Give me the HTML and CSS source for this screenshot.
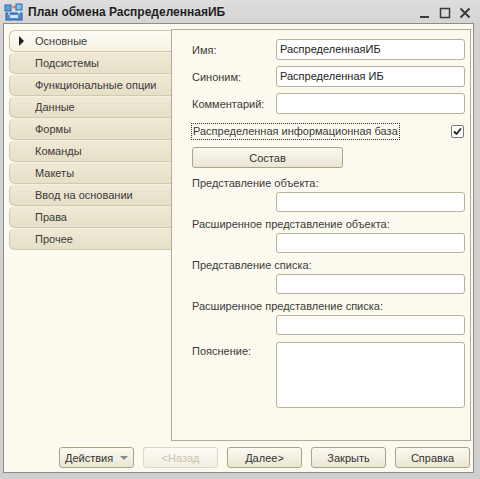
FILE: index.html
```html
<!DOCTYPE html>
<html lang="ru">
<head>
<meta charset="utf-8">
<title>План обмена РаспределеннаяИБ</title>
<link rel="stylesheet" href="styles.css">
</head>
<body>
<div class="window">
  <div class="titlebar">
    <svg class="appicon" width="20" height="18" viewBox="0 0 20 18">
      <rect x="1" y="2" width="6" height="6" fill="#5aa0d8" stroke="#2a6aa8"/>
      <rect x="12" y="1" width="6" height="6" fill="#7cc0ec" stroke="#2a6aa8"/>
      <rect x="2" y="10" width="16" height="7" fill="#4a8fcf" stroke="#245f9a"/>
      <path d="M8 4 L11 4 M10 2.5 L11.5 4 L10 5.5" stroke="#e05030" fill="none"/>
      <path d="M5 9 L5 12 M15 8 L15 11" stroke="#ffffff" fill="none"/>
      <rect x="6" y="12" width="8" height="3" fill="#cfe6f8"/>
    </svg>
    <span class="title">План обмена РаспределеннаяИБ</span>
    <div class="controls">
      <svg width="12" height="12" viewBox="0 0 12 12"><rect x="1" y="9" width="9" height="2" fill="#3a3a3a"/></svg>
      <svg width="12" height="12" viewBox="0 0 12 12"><rect x="1.5" y="1.5" width="9" height="9" fill="none" stroke="#3a3a3a" stroke-width="1.5"/></svg>
      <svg width="12" height="12" viewBox="0 0 12 12"><path d="M1.5 1.5 L10.5 10.5 M10.5 1.5 L1.5 10.5" stroke="#3a3a3a" stroke-width="2"/></svg>
    </div>
  </div>
  <div class="client">
    <div class="main">
      <div class="tabs">
        <div class="tab active"><span class="arrow"></span>Основные</div>
        <div class="tab">Подсистемы</div>
        <div class="tab">Функциональные опции</div>
        <div class="tab">Данные</div>
        <div class="tab">Формы</div>
        <div class="tab">Команды</div>
        <div class="tab">Макеты</div>
        <div class="tab">Ввод на основании</div>
        <div class="tab">Права</div>
        <div class="tab">Прочее</div>
      </div>
      <div class="panel">
        <div class="row">
          <span class="label">Имя:</span>
          <div class="input">РаспределеннаяИБ</div>
        </div>
        <div class="row">
          <span class="label">Синоним:</span>
          <div class="input">Распределенная ИБ</div>
        </div>
        <div class="row">
          <span class="label">Комментарий:</span>
          <div class="input"></div>
        </div>
        <div class="checkrow">
          <span class="focus">Распределенная информационная база</span>
          <span class="checkbox">
            <svg width="9" height="9" viewBox="0 0 9 9"><path d="M1 4.5 L3.5 7 L8 1.5" stroke="#222" stroke-width="1.8" fill="none"/></svg>
          </span>
        </div>
        <div class="btn wide">Состав</div>
        <div class="group">
          <span class="label">Представление объекта:</span>
          <div class="input short"></div>
        </div>
        <div class="group">
          <span class="label">Расширенное представление объекта:</span>
          <div class="input short"></div>
        </div>
        <div class="group">
          <span class="label">Представление списка:</span>
          <div class="input short"></div>
        </div>
        <div class="group">
          <span class="label">Расширенное представление списка:</span>
          <div class="input short"></div>
        </div>
        <div class="row top">
          <span class="label">Пояснение:</span>
          <div class="input area"></div>
        </div>
      </div>
    </div>
    <div class="footer">
      <div class="btn menu">Действия<span class="dd"></span></div>
      <div class="btn disabled">&lt;Назад</div>
      <div class="btn">Далее&gt;</div>
      <div class="btn">Закрыть</div>
      <div class="btn">Справка</div>
    </div>
  </div>
</div>
</body>
</html>
```

FILE: styles.css
```css
html, body {
  margin: 0;
  padding: 0;
}
body {
  font-family: "Liberation Sans", Arial, sans-serif;
  font-size: 11px;
  color: #3a3a3a;
  background: #d6d6d6;
}
.window {
  width: 480px;
  height: 479px;
  box-sizing: border-box;
  display: flex;
  flex-direction: column;
  background: linear-gradient(#dedede, #d2d2d2 30px, #cfcfcf);
  padding: 0 6px 6px 3px;
}
.titlebar {
  height: 23px;
  display: flex;
  align-items: center;
  flex: none;
}
.appicon {
  margin-left: 1px;
  margin-right: 4px;
}
.title {
  font-weight: bold;
  font-size: 12px;
  color: #1e1e1e;
  flex: 1;
}
.controls {
  display: flex;
  gap: 8px;
  margin-right: 3px;
  margin-top: 2px;
}
.client {
  flex: 1;
  background: #fcfaef;
  border: 1px solid #8e8e8e;
  display: flex;
  flex-direction: column;
  padding: 5px 2px 3px 5px;
  min-height: 0;
}
.main {
  height: 412px;
  display: flex;
  flex: none;
}
.tabs {
  width: 162px;
  display: flex;
  flex-direction: column;
  padding-top: 1px;
}
.tab {
  height: 22px;
  box-sizing: border-box;
  border: 1px solid #d2cab0;
  border-right: none;
  border-top-color: #f4f0e0;
  border-radius: 6px 0 0 6px;
  background: linear-gradient(#efe9d6, #e6dfc7);
  padding-left: 25px;
  line-height: 20px;
  color: #3a3a3a;
  position: relative;
}
.tab.active {
  background: linear-gradient(#fdfbf3, #f6f2e2);
  border-color: #cdc5aa;
}
.arrow {
  position: absolute;
  left: 9px;
  top: 5px;
  width: 0;
  height: 0;
  border-top: 5px solid transparent;
  border-bottom: 5px solid transparent;
  border-left: 5px solid #1e1e1e;
}
.panel {
  flex: 1;
  border: 1px solid #b3ac95;
  display: flex;
  flex-direction: column;
  padding: 9px 5px 0 20px;
}
.row {
  display: flex;
  align-items: center;
  margin-bottom: 6px;
}
.row.top {
  align-items: flex-start;
  margin-top: 2px;
}
.row.top .label {
  margin-top: 3px;
}
.label {
  width: 84px;
  flex: none;
  white-space: nowrap;
}
.input {
  flex: 1;
  height: 21px;
  box-sizing: border-box;
  background: #ffffff;
  border: 1px solid #b9b29b;
  border-radius: 3px;
  padding-left: 3px;
  line-height: 19px;
  color: #222;
}
.input.short {
  flex: none;
  height: 20px;
  margin-left: 84px;
}
.input.area {
  height: 66px;
}
.group {
  display: flex;
  flex-direction: column;
  margin-bottom: 5px;
}
.group .label {
  line-height: 14px;
  margin-bottom: 2px;
}
.checkrow {
  display: flex;
  align-items: center;
  justify-content: space-between;
  height: 19px;
  margin-top: 2px;
}
.focus {
  border: 1px dotted #333;
  line-height: 15px;
  padding: 0 1px;
  margin-left: -1px;
}
.checkbox {
  width: 11px;
  height: 11px;
  border: 1px solid #7a7a7a;
  border-radius: 2px;
  background: #fff;
  display: flex;
  align-items: center;
  justify-content: center;
  margin-right: 1px;
}
.btn {
  height: 21px;
  box-sizing: border-box;
  border: 1px solid #aaa38b;
  border-radius: 3px;
  background: linear-gradient(#fbf9f1, #ebe6d3);
  display: flex;
  align-items: center;
  justify-content: center;
  color: #333;
  width: 75px;
}
.btn.wide {
  width: 151px;
  margin-top: 6px;
  margin-bottom: 8px;
}
.btn.disabled {
  color: #cdc4a8;
  border-color: #dcd6c2;
  background: linear-gradient(#fcfbf5, #f2efe2);
}
.btn.menu {
  justify-content: flex-start;
  padding-left: 5px;
  gap: 7px;
}
.dd {
  width: 0;
  height: 0;
  border-left: 4px solid transparent;
  border-right: 4px solid transparent;
  border-top: 4px solid #8a8a8a;
  margin-top: 1px;
}
.footer {
  display: flex;
  justify-content: flex-end;
  gap: 9px;
  margin-top: 6px;
  padding-right: 1px;
}
```
